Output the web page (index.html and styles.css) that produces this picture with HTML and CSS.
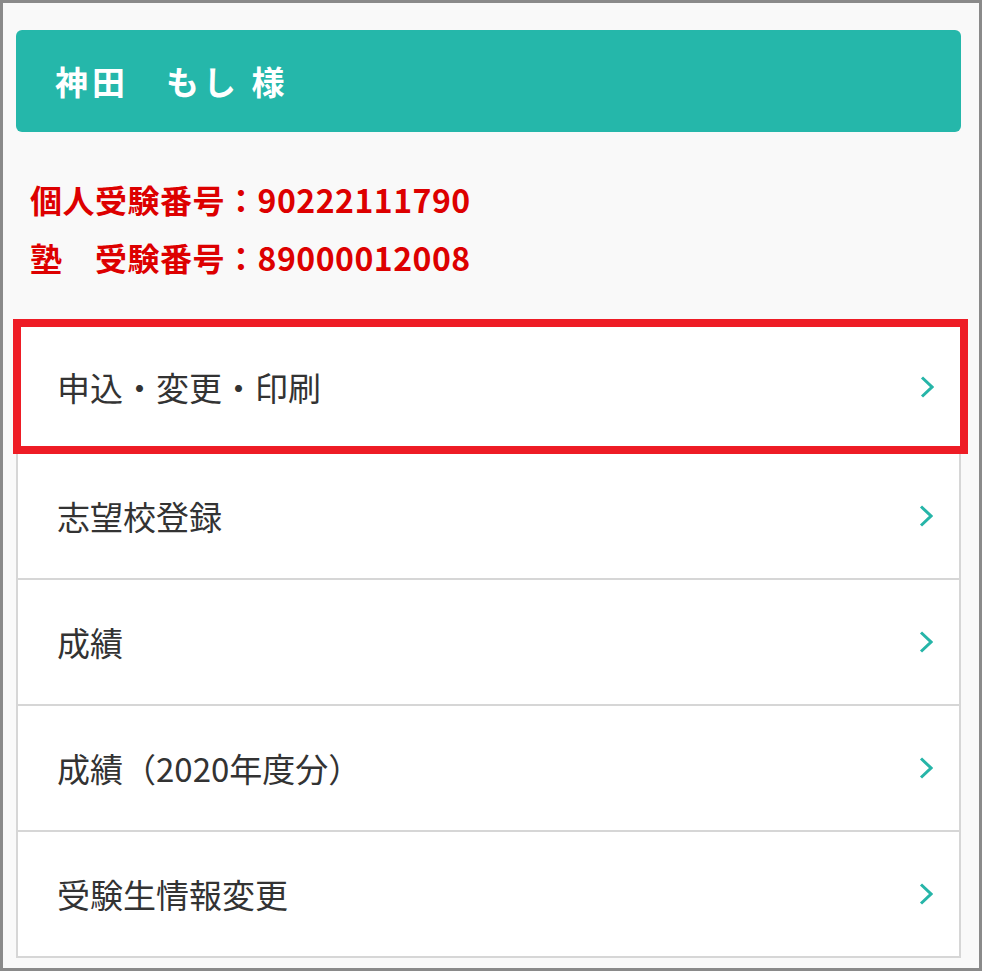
FILE: index.html
```html
<!DOCTYPE html>
<html lang="ja">
<head>
    <meta charset="UTF-8">
    <meta name="viewport" content="width=device-width, initial-scale=1.0">
    <title>マイページ</title>
    <link rel="stylesheet" href="styles.css">
</head>
<body>
    <div class="page">
        <div class="user-bar">神田　もし 様</div>
        <div class="ids">
            <p>個人受験番号：90222111790</p>
            <p>塾　受験番号：89000012008</p>
        </div>
        <ul class="menu">
            <li class="menu-item active">
                <a href="#">申込・変更・印刷</a>
                <svg class="chevron" viewBox="0 0 14 22"><polyline points="2,1.5 12,11 2,20.5"/></svg>
            </li>
            <li class="menu-item">
                <a href="#">志望校登録</a>
                <svg class="chevron" viewBox="0 0 14 22"><polyline points="2,1.5 12,11 2,20.5"/></svg>
            </li>
            <li class="menu-item">
                <a href="#">成績</a>
                <svg class="chevron" viewBox="0 0 14 22"><polyline points="2,1.5 12,11 2,20.5"/></svg>
            </li>
            <li class="menu-item">
                <a href="#">成績（2020年度分）</a>
                <svg class="chevron" viewBox="0 0 14 22"><polyline points="2,1.5 12,11 2,20.5"/></svg>
            </li>
            <li class="menu-item">
                <a href="#">受験生情報変更</a>
                <svg class="chevron" viewBox="0 0 14 22"><polyline points="2,1.5 12,11 2,20.5"/></svg>
            </li>
        </ul>
    </div>
</body>
</html>
```

FILE: styles.css
```css
body {
    font-family: "Noto Sans CJK JP", "Noto Sans", sans-serif;
    margin: 0;
    padding: 0;
    background-color: #f9f9f9;
}
.page {
    box-sizing: border-box;
    height: 971px;
    overflow: hidden;
    border: 3px solid #8a8a8a;
    background-color: #f9f9f9;
    padding: 27px 18px 0 13px;
}
.user-bar {
    height: 102px;
    display: flex;
    align-items: center;
    padding-left: 39px;
    background: #25b7aa;
    border-radius: 6px;
    color: white;
    font-size: 33px;
    font-weight: bold;
    letter-spacing: 4px;
}
.ids {
    margin-top: 38px;
    padding-left: 14px;
    color: #dd0000;
    font-size: 32px;
    font-weight: bold;
    line-height: 58px;
    letter-spacing: 0.5px;
}
.ids p {
    margin: 0;
}
.menu {
    list-style: none;
    margin: 33px 0 0;
    padding: 0;
    background: white;
    border-left: 2px solid #d6d6d6;
    border-right: 2px solid #d6d6d6;
}
.menu-item {
    box-sizing: border-box;
    height: 126px;
    display: flex;
    align-items: center;
    justify-content: space-between;
    padding: 0 26px 0 39px;
    border-bottom: 2px solid #d6d6d6;
    background: white;
}
.menu-item a {
    color: #333;
    text-decoration: none;
    font-size: 33px;
}
.menu-item.active {
    height: 135px;
    margin: 0 -9px 0 -5px;
    padding: 0 26px 0 36px;
    border: 8px solid #ee1c25;
}
.chevron {
    width: 14px;
    height: 22px;
    fill: none;
    stroke: #26b5a8;
    stroke-width: 3;
}
```
